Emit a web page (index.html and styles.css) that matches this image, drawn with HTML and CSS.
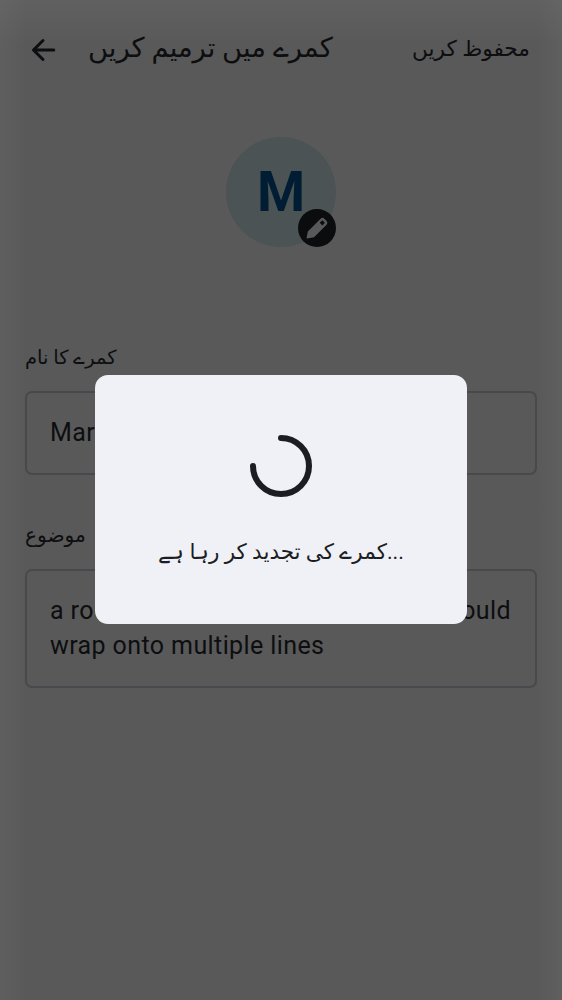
FILE: index.html
```
<!DOCTYPE html>
<html lang="ur">
<head>
<meta charset="utf-8">
<title>کمرے میں ترمیم کریں</title>
<link rel="stylesheet" href="styles.css">
</head>
<body>
<main class="screen">
  <header class="bar">
    <svg class="back" viewBox="0 0 36 36"><path d="M28.800 19H8.500M18 9.500L8.500 19L18 28.500"/></svg>
    <h1 class="title" dir="rtl">کمرے میں ترمیم کریں</h1>
    <span class="save" dir="rtl">محفوظ کریں</span>
  </header>
  <div class="avatar"><span class="initial">M</span>
    <span class="edit"><svg viewBox="0 0 38 38"><path fill-rule="evenodd" d="M8.600 28.800L9.800 22.400L22.600 9.700Q24.500 8 26.400 9.700L28.600 11.900Q30.300 13.800 28.600 15.700L16 28.200L9.200 29.400Q8.500 29.500 8.600 28.800Z M24.300 11.200l-2.600 2.600 2.600 2.600 2.600-2.600z"/></svg></span>
  </div>
  <label class="label name-label"><bdi dir="rtl">کمرے کا نام</bdi></label>
  <div class="field">Marketing</div>
  <label class="label topic-label"><bdi dir="rtl">موضوع</bdi></label>
  <div class="field topic"><div class="line"><span>a room topic</span><span>that should</span></div>wrap onto multiple lines</div>
</main>
<div class="overlay">
  <section class="dialog">
    <svg class="spinner" viewBox="0 0 64 64"><path d="M32 4A28 28 0 1 1 4 32"/></svg>
    <p class="message" dir="ltr">کمرے کی تجدید کر رہا ہے...</p>
  </section>
</div>
</body>
</html>
```
FILE: styles.css
```
* { box-sizing: border-box; }
body { margin: 0; background: #595959; color: #0d0e10; font-family: Roboto, "DejaVu Sans", sans-serif; }
.screen {
  height: 1000px;
  padding: 0 25px;
  display: flex;
  flex-direction: column;
  background:
    linear-gradient(to right, rgba(128, 128, 128, .15), transparent 26px),
    linear-gradient(to left, rgba(128, 128, 128, .15), transparent 26px),
    linear-gradient(to bottom, rgba(128, 128, 128, .18), transparent 45px);
}
.bar { height: 98px; display: flex; align-items: center; }
.back { width: 36px; height: 36px; fill: none; stroke: #0d0e10; stroke-width: 3; stroke-linecap: round; stroke-linejoin: round; }
.title { margin: -2px 0 0 27px; font-size: 27.400px; font-weight: 400; white-space: nowrap; }
.save { margin: -2px 7px 0 auto; font-size: 21.700px; white-space: nowrap; }
.avatar { position: relative; align-self: center; width: 110px; height: 110px; margin-top: 39px; border-radius: 50%; background: #4c5355; color: #001d34; font-size: 55px; font-weight: 700; line-height: 110px; text-align: center; }
.initial { display: block; }
.edit { position: absolute; right: 0; bottom: 0; width: 38px; height: 38px; border-radius: 50%; background: #0b0c0e; }
.edit svg { display: block; width: 38px; height: 38px; fill: #595959; }
.label { height: 30px; line-height: 32px; font-size: 19.500px; }
.name-label { margin-top: 95px; }
.topic-label { margin-top: 45px; font-size: 20.200px; line-height: 30px; }
.field { height: 84px; margin-top: 19px; border: 2px solid #48494c; border-radius: 7px; padding: 22px 23px; font-size: 25px; line-height: 35px; letter-spacing: .4px; }
.topic { height: 119px; }
.line { display: flex; justify-content: space-between; padding-right: 1px; }
.overlay { position: absolute; inset: 0; padding-bottom: 1px; display: flex; align-items: center; justify-content: center; }
.dialog { width: 372px; height: 249px; border-radius: 13px; background: #f0f1f6; display: flex; flex-direction: column; align-items: center; padding-top: 58.500px; }
.spinner { width: 64px; height: 64px; fill: none; stroke: #1b1d22; stroke-width: 6; stroke-linecap: round; }
.message { margin: 36px 0 0; font-size: 21.500px; line-height: 36px; white-space: nowrap; color: #1b1d22; }
```
